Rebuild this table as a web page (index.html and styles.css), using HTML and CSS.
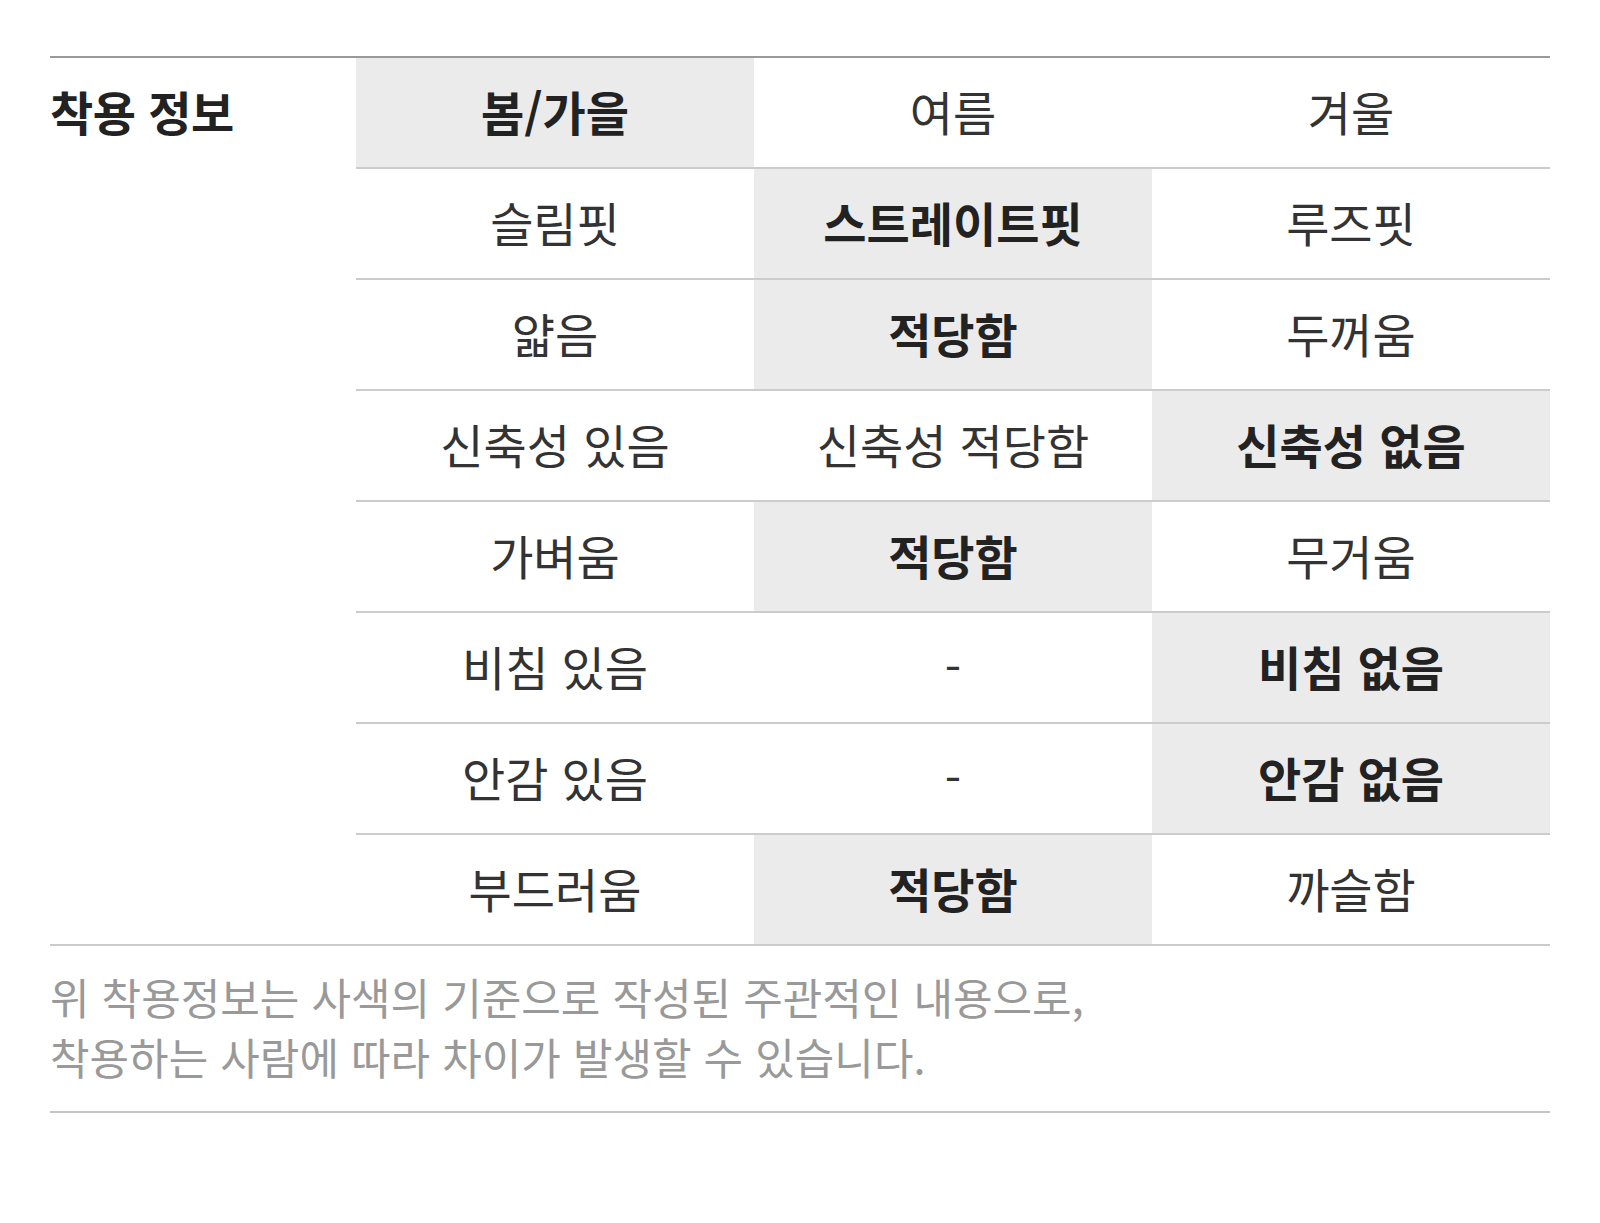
FILE: index.html
```html
<!DOCTYPE html>
<html lang="ko">
<head>
<meta charset="utf-8">
<link rel="stylesheet" href="styles.css">
</head>
<body>
<section class="fit">
  <div class="fit-table">
    <h3 class="fit-title">착용 정보</h3>
    <div class="fit-grid">
      <div class="cell on">봄/가을</div><div class="cell">여름</div><div class="cell">겨울</div>
      <div class="cell">슬림핏</div><div class="cell on">스트레이트핏</div><div class="cell">루즈핏</div>
      <div class="cell">얇음</div><div class="cell on">적당함</div><div class="cell">두꺼움</div>
      <div class="cell">신축성 있음</div><div class="cell">신축성 적당함</div><div class="cell on">신축성 없음</div>
      <div class="cell">가벼움</div><div class="cell on">적당함</div><div class="cell">무거움</div>
      <div class="cell">비침 있음</div><div class="cell">-</div><div class="cell on">비침 없음</div>
      <div class="cell">안감 있음</div><div class="cell">-</div><div class="cell on">안감 없음</div>
      <div class="cell">부드러움</div><div class="cell on">적당함</div><div class="cell">까슬함</div>
    </div>
  </div>
  <p class="fit-note">위 착용정보는 사색의 기준으로 작성된 주관적인 내용으로,<br>착용하는 사람에 따라 차이가 발생할 수 있습니다.</p>
</section>
</body>
</html>
```

FILE: styles.css
```css
* { box-sizing: border-box; }
html, body { margin: 0; padding: 0; background: #fff; }
body {
  font-family: "Noto Sans CJK KR", "Noto Sans", sans-serif;
  color: #333;
}
.fit {
  width: 1500px;
  margin: 56px 50px 0;
}
.fit-table {
  display: flex;
  border-top: 2px solid #999;
  border-bottom: 2px solid #ccc;
}
.fit-title {
  width: 306px;
  flex: none;
  margin: 0;
  height: 109px;
  padding-bottom: 4px;
  display: flex;
  align-items: center;
  font-size: 47px;
  font-weight: 700;
  color: #222;
  letter-spacing: -0.5px;
}
.fit-grid {
  flex: 1;
  display: grid;
  grid-template-columns: repeat(3, 1fr);
}
.cell {
  height: 111px;
  padding-bottom: 4px;
  border-bottom: 2px solid #ccc;
  display: flex;
  align-items: center;
  justify-content: center;
  font-size: 47px;
  color: #333;
}
.cell:nth-last-child(-n+3) { border-bottom: none; height: 109px; }
.cell.on {
  background: #ebebeb;
  font-weight: 700;
  color: #222;
}
.fit-note {
  margin: 0;
  padding: 20px 0 25px;
  border-bottom: 2px solid #c4c4c4;
  font-size: 43px;
  line-height: 60px;
  color: #999;
}
```
